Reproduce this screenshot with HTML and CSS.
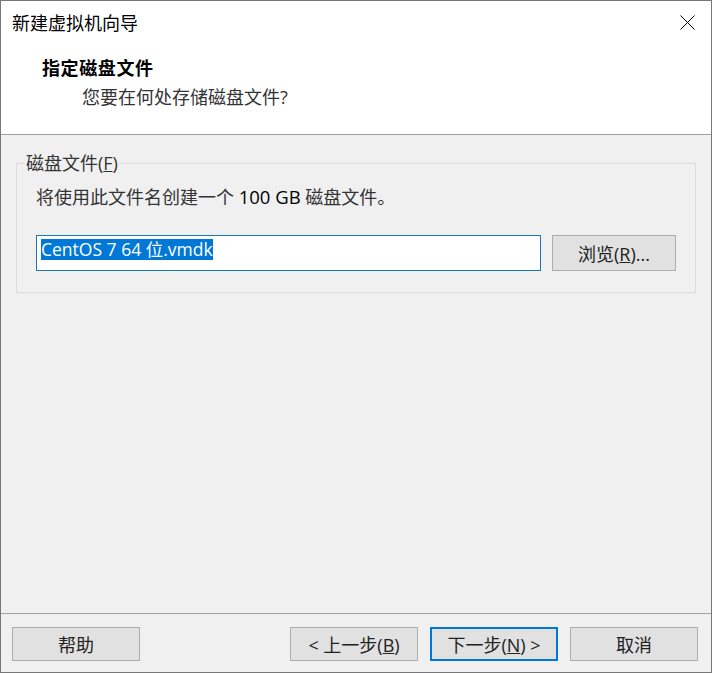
FILE: index.html
```html
<!DOCTYPE html>
<html lang="zh-CN">
<head>
  <meta charset="UTF-8">
  <meta name="viewport" content="width=device-width, initial-scale=1.0">
  <title>新建虚拟机向导</title>
  <link rel="stylesheet" href="styles.css">
</head>
<body>

  <div class="wizard-window">

    <div class="wizard-header">
      <div class="title-bar">
        <span class="window-title">新建虚拟机向导</span>
        <span class="close-btn">
          <svg width="15" height="15" viewBox="0 0 15 15">
            <path d="M0.5 0.5 L14.5 14.5 M14.5 0.5 L0.5 14.5" stroke="#000" stroke-width="1" fill="none"/>
          </svg>
        </span>
      </div>
      <div class="step-heading">
        <div class="step-title">指定磁盘文件</div>
        <div class="step-subtitle">您要在何处存储磁盘文件?</div>
      </div>
    </div>

    <div class="wizard-body">
      <fieldset class="group-box">
        <legend>磁盘文件(<u>F</u>)</legend>
        <div class="group-content">
          <p class="hint">将使用此文件名创建一个 <span class="latin">100 GB</span> 磁盘文件。</p>
          <div class="file-row">
            <div class="text-field"><span class="selected-text">CentOS 7 64 位.vmdk</span></div>
            <button class="btn browse-btn">浏览(<u>R</u>)...</button>
          </div>
        </div>
      </fieldset>
    </div>

    <div class="wizard-footer">
      <button class="btn">帮助</button>
      <div class="nav-buttons">
        <button class="btn">&lt; 上一步(<u>B</u>)</button>
        <button class="btn btn-default">下一步(<u>N</u>) &gt;</button>
        <button class="btn">取消</button>
      </div>
    </div>

  </div>

</body>
</html>
```

FILE: styles.css
```css
body {
  margin: 0;
  font-family: "Open Sans", "Noto Sans CJK SC", sans-serif;
  background: #f0f0f0;
}

.wizard-window {
  width: 712px;
  height: 673px;
  box-sizing: border-box;
  border: 1px solid #777;
  display: flex;
  flex-direction: column;
  background: #f0f0f0;
  color: #222;
}

/* white header: title bar + step heading */
.wizard-header {
  height: 134px;
  box-sizing: border-box;
  background: #fff;
  border-bottom: 1px solid #a0a0a0;
}

.title-bar {
  display: flex;
  justify-content: space-between;
  align-items: center;
  height: 42px;
  padding: 0 16px 0 11px;
}

.window-title {
  font-size: 18px;
  color: #000;
}

.close-btn svg {
  display: block;
}

.step-heading {
  padding: 13px 0 0 41px;
}

.step-title {
  font-size: 18px;
  font-weight: bold;
  line-height: 24px;
  letter-spacing: 0.6px;
  color: #000;
}

.step-subtitle {
  margin-top: 5px;
  padding-left: 40px;
  font-size: 18px;
  line-height: 24px;
  color: #333;
}

/* group box */
.wizard-body {
  flex: 1;
  padding: 0 15px;
}

.group-box {
  margin: 17px 0 0;
  padding: 0;
  border: 1px solid #dcdcdc;
  min-width: 0;
}

.group-box legend {
  margin-left: 8px;
  padding: 0 1px;
  font-size: 18px;
  line-height: 22px;
  color: #333;
}

.group-content {
  padding: 11px 19px 21px 19px;
}

.hint {
  margin: 0;
  font-size: 18px;
  line-height: 24px;
  color: #333;
}

.hint .latin {
  font-size: 18.5px;
  color: #000;
}

.file-row {
  display: flex;
  gap: 11px;
  margin-top: 26px;
}

.text-field {
  flex: 1;
  height: 36px;
  box-sizing: border-box;
  border: 1px solid #1f76b5;
  background: #fff;
  padding: 3px 4px 0;
}

.selected-text {
  display: inline-block;
  height: 21px;
  line-height: 21px;
  background: #0078d7;
  color: #fff;
  font-size: 17.5px;
}

/* buttons */
.btn {
  width: 128px;
  height: 34px;
  box-sizing: border-box;
  border: 1px solid #adadad;
  background: #e1e1e1;
  font-family: "Open Sans", "Noto Sans CJK SC", sans-serif;
  font-size: 18px;
  color: #222;
  padding: 0;
}

.browse-btn {
  width: 124px;
  height: 36px;
}

.btn-default {
  border: 2px solid #0078d7;
}

.wizard-footer {
  display: flex;
  justify-content: space-between;
  border-top: 1px solid #a0a0a0;
  padding: 13px 13px 11px 11px;
}

.nav-buttons {
  display: flex;
  gap: 12px;
}
```
